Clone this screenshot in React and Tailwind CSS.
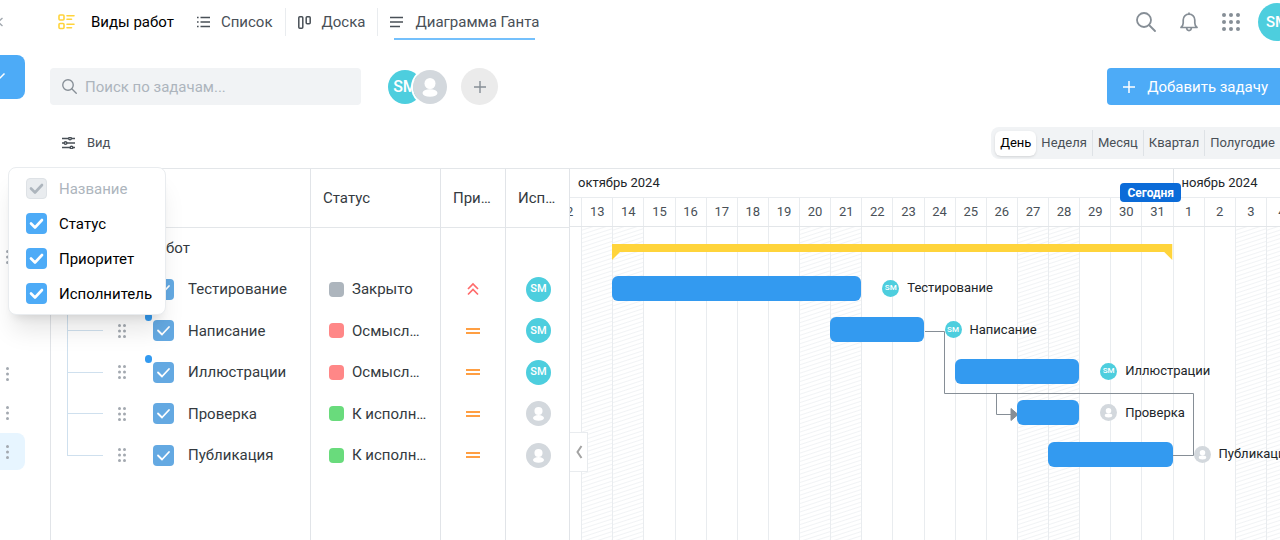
// Gantt view of a project board
import { useState } from "react";

const PEOPLE = { SM: "SM", none: null };

const TASKS = [
  { name: "Тестирование", status: "Закрыто", color: "bg-[#adb5bd]", priority: "high", user: PEOPLE.SM, start: 3, days: 8 },
  { name: "Написание", status: "Осмысление", color: "bg-[#ff8787]", priority: "mid", user: PEOPLE.SM, start: 10, days: 3, unread: true },
  { name: "Иллюстрации", status: "Осмысление", color: "bg-[#ff8787]", priority: "mid", user: PEOPLE.SM, start: 14, days: 4, unread: true },
  { name: "Проверка", status: "К исполнению", color: "bg-[#69db7c]", priority: "mid", user: PEOPLE.none, start: 16, days: 2 },
  { name: "Публикация", status: "К исполнению", color: "bg-[#69db7c]", priority: "mid", user: PEOPLE.none, start: 17, days: 4 },
];

const DAYS = [12, 13, 14, 15, 16, 17, 18, 19, 20, 21, 22, 23, 24, 25, 26, 27, 28, 29, 30, 31, 1, 2, 3, 4];
const DAYS_OFF = [1, 2, 8, 9, 15, 16, 22, 23];
const SCALES = ["День", "Неделя", "Месяц", "Квартал", "Полугодие"];

function Avatar({ user, size }) {
  if (!user) {
    return (
      <svg className={`${size} shrink-0 rounded-full bg-[#d3d8dd]`} viewBox="0 0 34 34" fill="#fff" role="img" aria-label="Не назначен">
        <circle cx="17" cy="13.5" r="5.5" />
        <ellipse cx="17" cy="23" rx="7.5" ry="3.8" />
      </svg>
    );
  }
  return (
    <span className={`${size} shrink-0 flex items-center justify-center rounded-full bg-[#4dcede] text-white font-medium`}>
      {user}
    </span>
  );
}

function Checkbox({ id, label, tone = "bg-[#4dabf7]", thick, disabled }) {
  const [checked, setChecked] = useState(true);
  return (
    <span className="grid shrink-0">
      <input
        id={id}
        type="checkbox"
        aria-label={label}
        checked={checked}
        disabled={disabled}
        onChange={(e) => setChecked(e.target.checked)}
        className={`col-start-1 row-start-1 w-[21px] h-[21px] appearance-none rounded ${
          disabled ? "bg-[#e9ecef] border border-[#dee2e6]" : tone
        }`}
      />
      {checked && (
        <svg
          className={`col-start-1 row-start-1 w-[21px] h-[21px] pointer-events-none ${disabled ? "text-[#adb5bd]" : "text-white"}`}
          viewBox="0 0 21 21"
          fill="none"
          stroke="currentColor"
          strokeWidth={thick ? 2.6 : 1.8}
          strokeLinecap="round"
          strokeLinejoin="round"
        >
          <path d="M5 10.500l4 4 7-7.500" />
        </svg>
      )}
    </span>
  );
}

function Dots({ cols = 1 }) {
  return (
    <svg className={cols === 2 ? "w-2.5 h-4" : "w-1.5 h-4"} viewBox={cols === 2 ? "0 0 10 16" : "0 0 6 16"} fill="#a3a9b0">
      {[2.5, 8, 13.5].map((y) => (
        <g key={y}>
          <circle cx="2.5" cy={y} r="1.5" />
          {cols === 2 && <circle cx="7.5" cy={y} r="1.5" />}
        </g>
      ))}
    </svg>
  );
}

function SearchIcon({ className }) {
  return (
    <svg className={className} viewBox="0 0 20 20" fill="none" stroke="currentColor" strokeWidth="1.8" strokeLinecap="round">
      <circle cx="8" cy="8" r="7" />
      <path d="M13 13l6 6" />
    </svg>
  );
}

function Priority({ level }) {
  if (level === "high") {
    return (
      <svg className="w-3.5 h-3.5" viewBox="0 0 14 14" fill="none" stroke="#ff6b6b" strokeWidth="1.7" role="img" aria-label="Высокий">
        <path d="M2 7l5-5 5 5M2 12.5l5-5 5 5" />
      </svg>
    );
  }
  return (
    <svg className="w-3.5 h-3.5" viewBox="0 0 14 14" stroke="#ff9f43" strokeWidth="2" role="img" aria-label="Средний">
      <path d="M0 5h14M0 9h14" />
    </svg>
  );
}

function Sidebar() {
  return (
    <aside className="w-[50px] shrink-0 flex flex-col items-start">
      <button className="h-[55px] pb-3" aria-label="Свернуть меню">
        <svg className="w-[3px] h-2.5" viewBox="6 0 3 10" fill="none" stroke="#a3a9b0" strokeWidth="1.4">
          <path d="M8.5 1L4 5l4.5 4" />
        </svg>
      </button>
      <button className="w-[25px] h-11 rounded-r-lg bg-[#4dabf7]" aria-label="Проекты">
        <svg className="w-1.5 h-2" viewBox="0 0 6 8" fill="none" stroke="#fff" strokeWidth="1.5">
          <path d="M-4 3l3 3 5.500-5.500" />
        </svg>
      </button>
      <div className="h-[140px]" />
      <button className="w-[25px] h-9 pl-[5px]" aria-label="Меню проекта 1"><Dots /></button>
      <div className="h-20" />
      <button className="w-[25px] h-[38px] pl-[5px]" aria-label="Меню проекта 2"><Dots /></button>
      <button className="w-[25px] h-10 pl-[5px]" aria-label="Меню проекта 3"><Dots /></button>
      <button className="w-[25px] h-[37px] pl-[5px] rounded-r-lg bg-[#e7f5ff]" aria-label="Меню проекта 4"><Dots /></button>
    </aside>
  );
}

function Header() {
  return (
    <header className="h-11 flex items-center">
      <svg className="w-[17px] h-4 ml-2 mr-4" viewBox="0 0 17 16" fill="none" stroke="#ffd43b" strokeWidth="1.6" strokeLinecap="round">
        <rect x="1" y="1" width="5" height="5" rx="1" />
        <rect x="1" y="9.500" width="5" height="5" rx="1" />
        <path d="M9 1.800h7M9 5.200h4.500M9 10.300h7M9 13.800h4.500" />
      </svg>
      <h1 className="text-black">Виды работ</h1>
      <nav className="flex items-center text-[#495057]">
        <a href="#list" className="flex items-center gap-[11px] pl-[23px] pr-3">
          <svg className="w-[13px] h-3" viewBox="0 0 13 12" stroke="currentColor" strokeWidth="1.400">
            <path d="M0 1.500h1.600M3.500 1.500H13M0 6h1.600M3.500 6H13M0 10.500h1.600M3.500 10.500H13" />
          </svg>
          Список
        </a>
        <a href="#board" className="h-7 flex items-center gap-[11px] px-3 border-x border-[#e9ecef]">
          <svg className="w-[13px] h-[13px]" viewBox="0 0 13 13" fill="none" stroke="currentColor" strokeWidth="1.500">
            <rect x="0.8" y="0.8" width="4" height="11.400" rx="1" />
            <rect x="8.200" y="0.800" width="4" height="7" rx="1" />
          </svg>
          Доска
        </a>
        <a href="#gantt" className="relative flex items-center gap-3 px-3">
          <svg className="w-[13px] h-3" viewBox="0 0 13 12" stroke="currentColor" strokeWidth="1.600">
            <path d="M0 1.500h13M0 6h13M0 10.500h10" />
          </svg>
          Диаграмма Ганта
          <span className="absolute left-4 right-4 -bottom-2 h-0.5 bg-[#74c0fc]" />
        </a>
      </nav>
      <div className="ml-auto -mr-4 flex items-center text-[#868e96]">
        <button className="mr-6" aria-label="Поиск"><SearchIcon className="w-5 h-5" /></button>
        <button className="mr-6" aria-label="Уведомления">
          <svg className="w-[18px] h-5" viewBox="0 0 18 20" fill="none" stroke="currentColor" strokeWidth="1.700" strokeLinejoin="round">
            <path d="M1 15.500c1.500-1.200 2.200-2.200 2.200-4.500V8c0-3.200 2.400-5.800 5.800-5.800s5.800 2.600 5.800 5.800v3c0 2.300.7 3.300 2.200 4.500zM9 0.500v1.700M6.500 15.500c.3 2.200 1.200 3.100 2.500 3.100s2.200-.9 2.500-3.100" />
          </svg>
        </button>
        <button className="mr-[18px]" aria-label="Приложения">
          <svg className="w-[18px] h-[18px]" viewBox="0 0 18 18" fill="currentColor">
            {[2, 9, 16].map((y) => [2, 9, 16].map((x) => <circle key={`${x}-${y}`} cx={x} cy={y} r="2" />))}
          </svg>
        </button>
        <button aria-label="Профиль"><Avatar user={PEOPLE.SM} size="w-[38px] h-[38px] text-[15px]" /></button>
      </div>
    </header>
  );
}

function Filters() {
  return (
    <div className="mt-6 flex items-center">
      <label className="w-[311px] h-[37px] flex items-center gap-2 px-3 rounded bg-[#f1f3f5] text-[#868e96]">
        <SearchIcon className="w-[15px] h-[15px] shrink-0" />
        <input
          type="search"
          aria-label="Поиск по задачам"
          placeholder="Поиск по задачам..."
          className="w-full bg-transparent outline-none placeholder:text-[#adb5bd]"
        />
      </label>
      <div className="ml-[27px] flex items-center">
        <Avatar user={PEOPLE.SM} size="w-[34px] h-[34px] text-base" />
        <span className="-ml-[9px] rounded-full ring-2 ring-white">
          <Avatar size="w-[34px] h-[34px]" />
        </span>
      </div>
      <button className="ml-3.5 w-[37px] h-[37px] flex items-center justify-center rounded-full bg-[#ebebeb]" aria-label="Добавить участника">
        <svg className="w-3 h-3" viewBox="0 0 12 12" stroke="#868e96" strokeWidth="1.400">
          <path d="M6 0v12M0 6h12" />
        </svg>
      </button>
      <button className="ml-auto h-[37px] flex items-center gap-3 pl-4 pr-3 rounded-l bg-[#4dabf7] text-white">
        <svg className="w-3 h-3" viewBox="0 0 12 12" stroke="currentColor" strokeWidth="1.500">
          <path d="M6 0v12M0 6h12" />
        </svg>
        Добавить задачу
      </button>
    </div>
  );
}

function ColumnsMenu() {
  return (
    <div className="absolute z-20 top-full -left-[42px] mt-2 w-[158px] py-[3px] pl-[17px] rounded-lg border border-[#e9ecef] bg-white shadow-xl shadow-black/10 text-[15px] text-black">
      {["Название", "Статус", "Приоритет", "Исполнитель"].map((c, i) => (
        <label key={c} htmlFor={`col-${i}`} className={`h-[35px] flex items-center gap-3 ${i === 0 ? "text-[#adb5bd]" : ""}`}>
          <Checkbox id={`col-${i}`} thick disabled={i === 0} />
          {c}
        </label>
      ))}
    </div>
  );
}

function Toolbar() {
  const [scale, setScale] = useState("День");
  const [open, setOpen] = useState(true);

  return (
    <div className="relative mt-[22px] mb-[9px] flex items-center text-[13px]">
      <button className="flex items-center gap-3 pl-3 text-[#495057]" onClick={() => setOpen(!open)}>
        <svg className="w-[13px] h-3" viewBox="0 0 13 12" fill="#fff" stroke="currentColor" strokeWidth="1.400">
          <path d="M0 1.500h13M0 6h13M0 10.500h13" />
          <circle cx="8" cy="1.500" r="1.300" />
          <circle cx="3.500" cy="6" r="1.300" />
          <circle cx="9.500" cy="10.500" r="1.300" />
        </svg>
        Вид
      </button>
      {open && <ColumnsMenu />}
      <div className="ml-auto h-8 -mr-2 flex items-center pl-1 pr-2 rounded-lg bg-[#f1f3f5] text-[#495057]">
        {SCALES.map((s, i) => (
          <button
            key={s}
            onClick={() => setScale(s)}
            className={`px-[5px] ${i > 1 ? "h-[26px] border-l border-[#dee2e6]" : "h-[25px]"} ${
              s === scale ? "rounded-md bg-white text-black shadow-sm" : ""
            }`}
          >
            {s}
          </button>
        ))}
      </div>
    </div>
  );
}

function TaskTable() {
  return (
    <table className="w-[519px] shrink-0 table-fixed border-x border-[#e1e4e8] text-left">
      <colgroup>
        <col className="w-[260px]" />
        <col className="w-[130px]" />
        <col className="w-[65px]" />
        <col className="w-16" />
      </colgroup>
      <thead>
        <tr className="h-[58px] border-b border-[#e3e6e9]">
          <th className="pl-14 font-normal"><span className="sr-only">Название</span></th>
          <th className="border-l border-[#e1e4e8] px-3 font-normal truncate">Статус</th>
          <th className="border-l border-[#e1e4e8] px-3 font-normal truncate">Приоритет</th>
          <th className="border-l border-[#e1e4e8] px-3 font-normal truncate">Исполнитель</th>
        </tr>
      </thead>
      <tbody>
        <tr className="h-[41px]">
          <td className="pl-14">Виды работ</td>
          <td className="border-l border-[#e1e4e8]" />
          <td className="border-l border-[#e1e4e8]" />
          <td className="border-l border-[#e1e4e8]" />
        </tr>
        {TASKS.map((t, i) => (
          <tr key={t.name} className="h-[41px] even:h-[42px]">
            <td className="p-0 h-[inherit]">
              <div className="h-full flex items-center pl-4">
                <span className="self-stretch flex flex-col w-9">
                  <span className="flex-1 border-l border-b border-[#cfe0ee]" />
                  <span className={`flex-1 ${i < TASKS.length - 1 ? "border-l border-[#cfe0ee]" : ""}`} />
                </span>
                <button className="ml-3.5" aria-label={`Переместить ${t.name}`}><Dots cols={2} /></button>
                <span className="relative ml-[26px]">
                  <Checkbox label={t.name} tone="bg-[#64a9e2]" />
                  {t.unread && <span className="absolute -left-2 -top-[7px] w-[7px] h-2 rounded-full bg-[#339af0]" />}
                </span>
                <span className="ml-3.5">{t.name}</span>
              </div>
            </td>
            <td className="border-l border-[#e1e4e8] p-0">
              <div className="flex items-center gap-2 pl-[18px] pr-[13px]">
                <span className={`w-[15px] h-[15px] shrink-0 rounded ${t.color}`} />
                <span className="truncate">{t.status}</span>
              </div>
            </td>
            <td className="border-l border-[#e1e4e8] p-0">
              <div className="flex justify-center"><Priority level={t.priority} /></div>
            </td>
            <td className="border-l border-[#e1e4e8] p-0">
              <div className="flex justify-center pl-0.5"><Avatar user={t.user} size="w-[25px] h-[25px] text-[11px]" /></div>
            </td>
          </tr>
        ))}
        <tr>
          <td />
          <td className="border-l border-[#e1e4e8]" />
          <td className="border-l border-[#e1e4e8]" />
          <td className="border-l border-[#e1e4e8]" />
        </tr>
      </tbody>
    </table>
  );
}

function Timeline() {
  return (
    <div className="relative flex-1 min-w-0 flex overflow-hidden">
      <div className="flex-1 -ml-5 -mr-[17px] flex flex-col text-[13px] text-[#495057]">
        <div className="relative h-[29px] grid grid-cols-24 items-center border-b border-[#e9ecef] text-[#212529]">
          <span className="col-span-20 pl-7">октябрь 2024</span>
          <span className="col-span-4 h-full flex items-center pl-2 border-l border-[#dee2e6]">ноябрь 2024</span>
        </div>
        <div className="relative h-[29px] grid grid-cols-24 border-b border-[#e3e6e9]">
          {DAYS.map((d) => (
            <span key={d} className="flex items-center justify-center border-l border-[#e9ecef]">{d}</span>
          ))}
          <span className="absolute right-[116px] -top-[15px] h-[19px] px-[7px] flex items-center rounded bg-[#0b6bd8] text-xs font-bold text-white">
            Сегодня
          </span>
        </div>

        <div className="relative flex-1">
          <div className="absolute inset-0 grid grid-cols-24">
            {DAYS.map((d, i) => (
              <span
                key={d}
                className={`border-l border-[#e9ecef] ${
                  DAYS_OFF.includes(i)
                    ? "bg-[repeating-linear-gradient(162deg,#ffffff_0px,#ffffff_2px,#f1f3f5_3px,#ffffff_4px)]"
                    : ""
                }`}
              />
            ))}
          </div>

          {/* Dependencies between tasks */}
          <svg className="absolute left-5 top-0 w-[660px] h-[250px]" viewBox="0 0 660 250" fill="none" stroke="#868e96">
            <path d="M355 104.500H374.500V166.500H623.500V228.500H603M426.500 166.500V187.500H442" />
            <path d="M441 181.500l7 6-7 6z" fill="#868e96" />
          </svg>

          <div className="relative">
            <div className="h-[41px] grid grid-cols-24 items-start pt-[17px]">
              <svg className="col-start-3 col-span-18 w-full h-4" fill="#ffd43b">
                <rect width="100%" height="8" />
                <path d="M0 8h8l-8 8z" />
                <svg x="100%" overflow="visible"><path d="M-8 8h8v8z" /></svg>
              </svg>
            </div>
            {TASKS.map((t) => (
              <div key={t.name} className="h-[41px] even:h-[42px] pb-0.5 grid grid-cols-24 items-center">
                <div
                  className="h-[25px] rounded-md bg-[#339af0]"
                  style={{ gridColumn: `${t.start} / span ${t.days}` }}
                />
                <div className="w-0 flex items-center gap-2 pl-[21px] whitespace-nowrap text-[#212529]">
                  <Avatar user={t.user} size="w-[17px] h-[17px] text-[8px]" />
                  {t.name}
                </div>
              </div>
            ))}
          </div>
        </div>
      </div>

      <button
        className="absolute left-0 top-[263px] w-[18px] h-10 flex items-center justify-center border border-l-0 border-[#e9ecef] bg-white"
        aria-label="Свернуть таблицу"
      >
        <svg className="w-2 h-3.5" viewBox="0 0 8 14" fill="none" stroke="#a3a3a3" strokeWidth="2">
          <path d="M6.500 1L2.500 7l4 6" />
        </svg>
      </button>
    </div>
  );
}

export default function App() {
  return (
    <div className="min-h-screen flex overflow-hidden bg-white font-[Roboto,sans-serif] text-[15px] leading-5 text-[#343a40]">
      <Sidebar />
      <main className="flex-1 min-w-0 flex flex-col">
        <Header />
        <Filters />
        <Toolbar />
        <section className="flex-1 flex border-t border-[#e3e6e9]">
          <TaskTable />
          <Timeline />
        </section>
      </main>
    </div>
  );
}
